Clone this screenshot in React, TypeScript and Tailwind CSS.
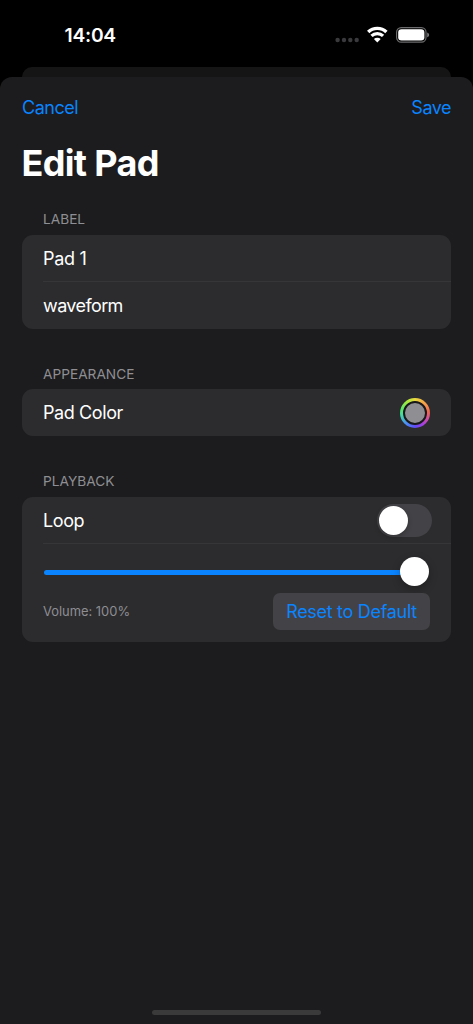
import { useState, type ReactNode } from 'react'

const DEFAULT_VOLUME = 100

function StatusBar() {
  return (
    <div className="flex h-[67px] items-start justify-between pl-[64.5px] pr-[43px]">
      <span className="mt-[22px] text-[19.3px] font-semibold leading-[26px] tracking-[-0.25px] text-white">14:04</span>
      <div className="mt-[26px] flex items-center">
        <svg width="24" height="18" viewBox="0 0 24 18" fill="#3a3a3c" aria-hidden="true">
          <circle cx="2.6" cy="14" r="2.2" />
          <circle cx="9" cy="14" r="2.2" />
          <circle cx="15.3" cy="14" r="2.2" />
          <circle cx="21.7" cy="14" r="2.2" />
        </svg>
        <svg className="ml-[8px]" width="21" height="18" viewBox="0 0 21 18" fill="none" stroke="#fff" aria-hidden="true">
          <path d="M1.2 6a13.2 13.2 0 0 1 18.2 0" strokeWidth="3.4" />
          <path d="M4.5 9.9a8.3 8.3 0 0 1 11.6 0" strokeWidth="3.2" />
          <path d="M10.3 16.4 6.9 13a4.9 4.9 0 0 1 6.8 0z" fill="#fff" stroke="none" />
        </svg>
        <svg className="ml-[8px]" width="34" height="18" viewBox="0 0 34 18" aria-hidden="true">
          <rect x="0.6" y="1.6" width="29.4" height="14.6" rx="4.6" fill="none" stroke="#6b6b6d" strokeWidth="1.2" />
          <rect x="2.2" y="3.2" width="26.2" height="11.4" rx="3.3" fill="#fff" />
          <path d="M31.2 6.6c1.2.4 1.9 1.3 1.9 2.3s-.7 1.9-1.9 2.3z" fill="#77777a" />
        </svg>
      </div>
    </div>
  )
}

function Section({ title, children }: { title: string; children: ReactNode }) {
  return (
    <section className="mb-[36px]">
      <h2 className="mb-[5.5px] pl-[21px] text-[13.7px] font-normal leading-[19px] text-[#8e8e93]">{title}</h2>
      <div className="rounded-[11px] bg-[#2c2c2e]">{children}</div>
    </section>
  )
}

function Divider() {
  return <div className="-mt-px ml-[21px] h-px bg-[#363638]" />
}

export default function App() {
  const [label, setLabel] = useState('Pad 1')
  const [icon, setIcon] = useState('waveform')
  const [loop, setLoop] = useState(false)
  const [volume, setVolume] = useState(DEFAULT_VOLUME)

  const inputClass = 'block h-[47px] w-full bg-transparent px-[21px] text-[18px] text-white outline-none'

  return (
    <div className="flex h-screen flex-col overflow-hidden bg-black font-['Inter','Liberation_Sans',sans-serif]">
      <StatusBar />
      <div className="mx-[22px] h-[10px] rounded-t-[10px] bg-[#151516]" />
      <div className="flex flex-1 flex-col bg-[linear-gradient(#151516,#151516)] bg-[length:429px_12px] bg-top bg-no-repeat">
        <main className="flex flex-1 flex-col rounded-t-[12px] bg-[#1c1c1e] px-[22px]">
          <header className="mt-[17px] flex h-[27px] items-center justify-between text-[18px] text-[#0a84ff]">
            <button className="tracking-[-0.5px]">Cancel</button>
            <button className="tracking-[-0.5px]">Save</button>
          </header>

          <h1 className="-ml-[0.5px] mt-[20px] text-[36px] font-bold leading-[45px] tracking-[-0.65px] text-white">Edit Pad</h1>

          <div className="mt-[24px]">
            <Section title="LABEL">
              <input
                className={`${inputClass} tracking-[-0.3px]`}
                value={label}
                aria-label="Label"
                onChange={(e) => setLabel(e.target.value)}
              />
              <Divider />
              <input
                className={`${inputClass} tracking-[-0.6px]`}
                value={icon}
                aria-label="Icon"
                onChange={(e) => setIcon(e.target.value)}
              />
            </Section>

            <Section title="APPEARANCE">
              <div className="flex h-[47px] items-center justify-between pl-[21px] pr-[21.5px]">
                <span className="text-[18px] tracking-[-0.4px] text-white">Pad Color</span>
                <button
                  aria-label="Pad Color"
                  className="flex size-[30px] items-center justify-center rounded-full bg-[conic-gradient(#e8d83f,#f79a4b_50deg,#f2654f_85deg,#d14fa0_115deg,#a43ee0_145deg,#5f4df5_180deg,#4b8df5_220deg,#43d9a6_260deg,#55e86c_285deg,#a6ea3f_325deg,#e8d83f)]"
                >
                  <span className="size-[24px] rounded-full border-2 border-[#18181a] bg-[#8e8e93]" />
                </button>
              </div>
            </Section>

            <Section title="PLAYBACK">
              <div className="flex h-[47px] items-center justify-between pl-[21px] pr-[19px]">
                <span className="text-[18px] tracking-[-0.4px] text-white">Loop</span>
                <button
                  role="switch"
                  aria-checked={loop}
                  aria-label="Loop"
                  onClick={() => setLoop(!loop)}
                  className={`flex h-[33px] w-[55px] items-center rounded-full px-[2px] ${loop ? 'justify-end bg-[#30d158]' : 'bg-[#434347]'}`}
                >
                  <span className="size-[29px] rounded-full bg-white shadow-[0_2px_5px_rgba(0,0,0,0.25)]" />
                </button>
              </div>
              <Divider />

              <div className="px-[21px] pb-[11.5px] pt-[13.5px]">
                <div className="flex h-[29px] items-center pl-[1px]">
                  <div className="mt-[2px] h-[4.5px] rounded-l-full bg-[#0a84ff]" style={{ width: `${volume * 0.94}%` }} />
                  <span className="-ml-[7px] size-[29px] shrink-0 rounded-full bg-white shadow-[0_3px_8px_rgba(0,0,0,0.28)]" />
                </div>
                <div className="mt-[7px] flex items-center justify-between">
                  <span className="text-[12.9px] text-[#8e8e93]">Volume: {volume}%</span>
                  <button
                    onClick={() => setVolume(DEFAULT_VOLUME)}
                    className="h-[37px] w-[157px] whitespace-nowrap rounded-[7px] bg-[#434347] text-[18px] tracking-[-0.3px] text-[#0a84ff]"
                  >
                    Reset to Default
                  </button>
                </div>
              </div>
            </Section>
          </div>

          <div className="mx-auto mb-[9px] mt-auto h-[5px] w-[169px] shrink-0 rounded-full bg-[#3a3a3b]" />
        </main>
      </div>
    </div>
  )
}
